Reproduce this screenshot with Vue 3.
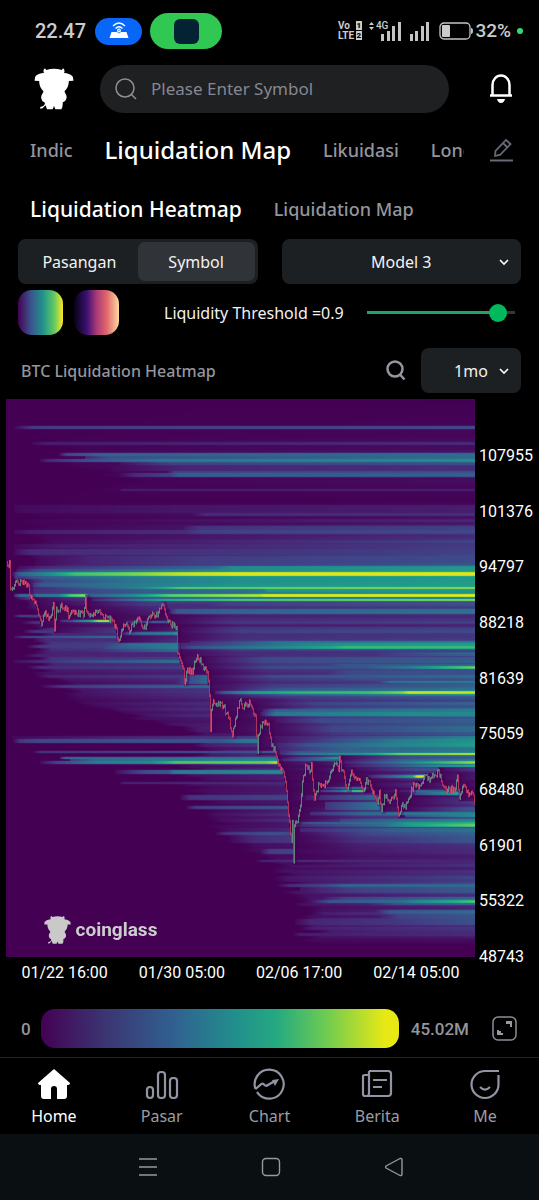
<script setup>
import { onMounted, ref } from 'vue'

const bull =
  'M133 206 Q136 205 139 210 Q162 203 185 210 Q188 205 191 206 Q195 212 192 219 Q208 219 218 230 L220 242 L206 243 Q207 260 193 274 Q195 277 196 280 Q201 287 199 295 Q196 305 188 306 Q189 318 184 327 L166 327 L162 317 L158 327 L141 327 L137 315 L128 324 L121 325 L121 320 L130 317 Q137 312 134 307 Q125 303 124 294 Q123 286 128 280 Q129 277 131 274 Q117 260 118 243 L104 242 L106 230 Q115 219 132 219 Q129 211 133 206Z'

const tabs = ['Indic', 'Liquidation Map', 'Likuidasi', 'Long/Short']
const prices = [107955, 101376, 94797, 88218, 81639, 75059, 68480, 61901, 55322, 48743]
const times = ['01/22 16:00', '01/30 05:00', '02/06 17:00', '02/14 05:00']
const threshold = ref(0.9)
const search = ref('')
const model = ref('Model 3')
const range = ref('1mo')
const canvas = ref(null)

const L = 6
const T = 399
const W = 469
const H = 558

const viridis = [
  [68, 1, 84], [72, 36, 117], [64, 67, 135], [52, 94, 141], [41, 120, 142],
  [32, 144, 140], [34, 167, 132], [68, 190, 112], [121, 209, 81], [189, 222, 38], [240, 230, 30]
]

// Liquidation levels: top, bottom, then [x, intensity] stops
const bands = [
  [426, 429, [14, 0.02], [34, 0.19], [475, 0.24]],
  [442, 445, [32, 0.02], [45, 0.08], [475, 0.12]],
  [453, 456, [58, 0], [66, 0.22], [100, 0.32], [475, 0.36]],
  [456, 459, [85, 0.1], [110, 0.25], [475, 0.35]],
  [459, 462, [38, 0], [48, 0.12], [90, 0.26], [160, 0.4], [475, 0.5]],
  [462, 465, [120, 0.04], [170, 0.2], [475, 0.25]],
  [465, 471, [110, 0.02], [180, 0.1], [475, 0.13]],
  [471, 473, [168, 0.06], [174, 0.2], [475, 0.25]],
  [473, 477, [115, 0], [135, 0.12], [170, 0.2], [178, 0.3], [475, 0.3]],
  [489, 491, [118, 0], [122, 0.08], [475, 0.09]],
  [505, 513, [14, 0.02], [30, 0.03], [180, 0.06], [475, 0.08]],
  [513, 516, [190, 0.02], [205, 0.12], [475, 0.13]],
  [526, 530, [180, 0.04], [198, 0.15], [475, 0.19]],
  [530, 534, [14, 0.03], [30, 0.08], [185, 0.13], [200, 0.19], [475, 0.22]],
  [544, 548, [14, 0.02], [60, 0.08], [475, 0.17]],
  [549, 555, [14, 0.03], [30, 0.12], [475, 0.19]],
  [556, 566, [35, 0.02], [90, 0.1], [200, 0.18], [475, 0.23]],
  [566, 569, [18, 0.04], [50, 0.13], [215, 0.34], [230, 0.49], [475, 0.53]],
  [569, 572, [16, 0.05], [40, 0.25], [235, 0.48], [475, 0.55]],
  [572, 576, [12, 0.08], [20, 0.32], [50, 0.5], [75, 0.7], [130, 0.8], [180, 0.92], [240, 0.97], [475, 0.97]],
  [576, 579, [14, 0.15], [40, 0.28], [100, 0.37], [230, 0.5], [475, 0.53]],
  [579, 583, [28, 0.04], [45, 0.22], [130, 0.38], [240, 0.5], [475, 0.55]],
  [583, 587, [28, 0.06], [40, 0.28], [140, 0.42], [240, 0.52], [475, 0.56]],
  [587, 589, [30, 0.08], [140, 0.46], [180, 0.78], [475, 0.86]],
  [589, 592, [30, 0.12], [150, 0.3], [240, 0.36], [262, 0.4], [268, 0.52], [475, 0.53]],
  [592, 594, [30, 0.12], [150, 0.3], [240, 0.34], [262, 0.42], [475, 0.52]],
  [594, 597, [14, 0.12], [20, 0.35], [58, 0.42], [70, 0.76], [84, 0.86], [88, 0.3], [130, 0.48], [170, 0.78], [240, 0.9], [260, 0.92], [264, 0.99], [475, 0.99]],
  [597, 599, [92, 0.06], [140, 0.25], [240, 0.35], [475, 0.4]],
  [599, 601, [92, 0.1], [120, 0.3], [165, 0.66], [240, 0.8], [475, 0.88]],
  [601, 604, [120, 0.05], [160, 0.16], [475, 0.22]],
  [604, 609, [125, 0.05], [155, 0.12], [475, 0.18]],
  [609, 614, [168, 0.05], [177, 0.28], [230, 0.32], [475, 0.38]],
  [615, 617, [14, 0.05], [20, 0.2], [51, 0.2], [52, 0]],
  [620, 622, [60, 0.1], [76, 0.4], [90, 0.65], [98, 0.99], [108, 0.99], [111, 0.4], [112, 0]],
  [621, 623, [125, 0.1], [145, 0.35], [172, 0.3], [173, 0]],
  [630, 632, [275, 0.1], [475, 0.2]],
  [632, 635, [120, 0.12], [140, 0.36], [172, 0.45], [177, 0.6], [178, 0]],
  [636, 638, [14, 0.05], [25, 0.2], [115, 0.38], [116, 0], [180, 0.02], [475, 0.12]],
  [641, 643, [190, 0.1], [230, 0.2], [280, 0.38], [475, 0.42]],
  [643, 646, [90, 0.08], [130, 0.36], [177, 0.42], [180, 0.1], [280, 0.4], [345, 0.52], [475, 0.56]],
  [646, 649, [90, 0.08], [115, 0.28], [177, 0.44], [180, 0.12], [195, 0.26], [250, 0.4], [330, 0.6], [345, 0.68], [475, 0.68]],
  [649, 652, [65, 0.05], [130, 0.22], [177, 0.34], [180, 0], [475, 0.12]],
  [652, 656, [350, 0.1], [440, 0.28], [475, 0.32]],
  [660, 663, [14, 0.03], [60, 0.18], [120, 0.28], [178, 0.38], [179, 0]],
  [664, 666, [310, 0.1], [345, 0.28], [475, 0.3]],
  [666, 669, [320, 0.12], [370, 0.28], [410, 0.42], [435, 0.6], [475, 0.8]],
  [670, 680, [300, 0.04], [350, 0.22], [475, 0.25]],
  [675, 684, [170, 0.04], [190, 0.24], [206, 0.34], [208, 0.02], [475, 0.26]],
  [681, 683, [380, 0.2], [390, 0.4], [475, 0.43]],
  [685, 688, [42, 0.02], [65, 0.17], [140, 0.27], [208, 0.34], [210, 0.04], [475, 0.3]],
  [688, 691, [235, 0.08], [280, 0.28], [475, 0.38]],
  [691, 694, [215, 0.08], [225, 0.3], [250, 0.56], [300, 0.65], [370, 0.7], [402, 0.82], [408, 0.94], [475, 0.92]],
  [694, 696, [235, 0.08], [290, 0.28], [400, 0.4], [475, 0.46]],
  [709, 712, [262, 0.06], [275, 0.3], [475, 0.42]],
  [712, 716, [260, 0.05], [275, 0.4], [400, 0.48], [475, 0.47]],
  [718, 723, [275, 0.05], [320, 0.22], [475, 0.3]],
  [736, 739, [12, 0.02], [257, 0.18], [258, 0.02], [370, 0.25], [475, 0.46]],
  [739, 743, [13, 0.02], [20, 0.16], [35, 0.22], [220, 0.27], [240, 0.38], [257, 0.42], [258, 0], [300, 0.12], [400, 0.42], [475, 0.52]],
  [743, 747, [275, 0.08], [310, 0.27], [390, 0.44], [475, 0.55]],
  [747, 751, [275, 0.08], [340, 0.3], [475, 0.4]],
  [751, 753, [32, 0], [40, 0.17], [240, 0.26], [275, 0.32], [276, 0.08], [300, 0.28], [475, 0.42]],
  [753, 755, [278, 0.1], [300, 0.38], [360, 0.55], [400, 0.85], [475, 0.97]],
  [757, 759, [60, 0.1], [65, 0.38], [100, 0.36], [275, 0.42], [277, 0], [320, 0.35], [335, 0.55], [338, 0.5], [340, 0], [475, 0.3]],
  [759, 761, [70, 0.15], [95, 0.34], [165, 0.4], [278, 0.45], [279, 0.1], [320, 0.34], [338, 0.3], [340, 0], [475, 0.38]],
  [761, 764, [40, 0.03], [55, 0.2], [95, 0.42], [150, 0.48], [175, 0.73], [265, 0.78], [276, 0.9], [279, 0], [340, 0.05], [405, 0.42], [440, 0.66], [475, 0.86]],
  [765, 767, [345, 0.05], [400, 0.3], [440, 0.54], [475, 0.65]],
  [770, 774, [115, 0.03], [145, 0.24], [168, 0.28], [174, 0.42], [282, 0.48], [283, 0]],
  [775, 778, [368, 0.1], [395, 0.38], [412, 0.6], [417, 0.95], [423, 0.95], [425, 0.1]],
  [782, 784, [118, 0], [124, 0.1], [285, 0.12], [286, 0]],
  [787, 789, [325, 0.1], [345, 0.35], [363, 0.36], [370, 0]],
  [790, 792, [320, 0.15], [340, 0.4], [350, 0.76], [363, 0.8], [365, 0], [409, 0.1], [415, 0.35], [455, 0.36], [460, 0]],
  [792, 795, [410, 0.2], [440, 0.46], [457, 0.62], [459, 0.1]],
  [795, 800, [180, 0.02], [190, 0.15], [287, 0.2], [288, 0], [320, 0.12], [370, 0.32], [377, 0.34], [380, 0.03]],
  [802, 810, [325, 0.15], [375, 0.38], [378, 0.38], [380, 0.1]],
  [806, 809, [186, 0.02], [195, 0.18], [287, 0.28], [288, 0]],
  [812, 815, [310, 0.12], [360, 0.34], [475, 0.45]],
  [815, 817, [405, 0.25], [475, 0.5]],
  [819, 822, [340, 0.2], [390, 0.34], [475, 0.48]],
  [822, 824, [295, 0.1], [310, 0.28], [390, 0.4], [405, 0.54], [475, 0.66]],
  [824, 827, [295, 0.1], [380, 0.35], [410, 0.56], [475, 0.78]],
  [828, 832, [300, 0.1], [390, 0.3], [475, 0.38]],
  [832, 835, [214, 0], [225, 0.14], [270, 0.26], [291, 0.22], [292, 0], [370, 0.22], [475, 0.32]],
  [835, 843, [230, 0.02], [255, 0.12], [290, 0.16], [292, 0], [360, 0.12], [475, 0.27]],
  [849, 854, [258, 0], [270, 0.18], [292, 0.2], [293, 0.02], [475, 0.12]],
  [860, 862, [255, 0], [262, 0.1], [292, 0.12], [475, 0.1]],
  [884, 887, [276, 0], [290, 0.13], [325, 0.22], [345, 0.33], [475, 0.35]],
  [887, 893, [300, 0.05], [350, 0.18], [475, 0.28]],
  [897, 900, [318, 0.04], [345, 0.2], [475, 0.34]],
  [900, 903, [310, 0.04], [330, 0.27], [400, 0.36], [420, 0.5], [450, 0.62], [475, 0.74]],
  [903, 905, [370, 0.1], [400, 0.26], [475, 0.34]],
  [910, 914, [375, 0.08], [390, 0.28], [475, 0.35]],
  [914, 919, [375, 0.05], [400, 0.2], [475, 0.26]],
  [919, 925, [295, 0.02], [310, 0.1], [395, 0.16], [475, 0.25]],
  [933, 936, [292, 0], [300, 0.08], [475, 0.12]]
]

// Ambient levels: y, first x, intensity at the left and right ends
const ambient = [
  [399, 14, 0, 0], [425, 20, 0, 0.01], [450, 50, 0.01, 0.04], [465, 60, 0.01, 0.08],
  [482, 120, 0.01, 0.03], [500, 14, 0, 0], [530, 14, 0.01, 0.12], [560, 20, 0.04, 0.2],
  [575, 16, 0.1, 0.3], [602, 14, 0.12, 0.2], [625, 20, 0.1, 0.14], [645, 24, 0.14, 0.22],
  [665, 20, 0.1, 0.24], [680, 40, 0.05, 0.28], [700, 60, 0.02, 0.28], [730, 170, 0.05, 0.3],
  [750, 190, 0.06, 0.36], [775, 170, 0.03, 0.2], [800, 180, 0.02, 0.16], [820, 195, 0.02, 0.34],
  [845, 220, 0.03, 0.16], [858, 262, 0.04, 0.09], [885, 275, 0.04, 0.18], [905, 290, 0.05, 0.16],
  [925, 296, 0.07, 0.14], [940, 290, 0.02, 0.03], [944, 290, 0, 0], [958, 290, 0, 0]
]

const path = [
  6, 562, 10, 563, 10, 588, 14, 585, 15, 581, 19, 584, 20, 580, 24, 583, 28, 585, 30, 597, 33, 599, 36, 605, 38, 614,
  41, 625, 44, 613, 46, 616, 49, 617, 51, 614, 53, 603, 54, 630, 56, 607, 58, 610, 60, 606, 64, 609, 67, 608, 68, 618,
  71, 611, 76, 613, 80, 612, 83, 616, 85, 597, 86, 611, 90, 614, 95, 611, 100, 613, 106, 616, 112, 620, 115, 625,
  118, 640, 122, 629, 125, 624, 128, 628, 130, 630, 131, 624, 135, 622, 138, 618, 141, 625, 145, 628, 147, 619,
  151, 614, 155, 616, 158, 612, 162, 603, 166, 616, 170, 624, 173, 626, 176, 627, 177, 652, 180, 660, 183, 668,
  184, 683, 187, 668, 190, 673, 193, 668, 196, 658, 200, 658, 203, 669, 207, 672, 209, 695, 210, 730, 211, 710,
  213, 700, 217, 705, 220, 702, 223, 706, 226, 713, 229, 718, 232, 736, 235, 718, 239, 700, 243, 708, 245, 703,
  250, 704, 255, 715, 257, 752, 258, 735, 262, 722, 268, 724, 271, 745, 275, 752, 279, 765, 283, 772, 286, 790,
  288, 815, 291, 842, 292, 820, 293, 862, 294, 825, 297, 822, 300, 805, 303, 775, 306, 765, 310, 770, 311, 763,
  313, 790, 314, 799, 318, 783, 322, 785, 327, 782, 331, 770, 335, 763, 338, 770, 339, 757, 341, 770, 344, 777,
  347, 789, 351, 770, 356, 780, 360, 782, 363, 790, 366, 778, 370, 785, 373, 791, 377, 803, 379, 790, 381, 811,
  384, 795, 388, 800, 392, 797, 395, 790, 398, 815, 401, 805, 405, 808, 409, 797, 413, 783, 420, 785, 425, 775,
  430, 778, 435, 775, 438, 769, 442, 785, 447, 790, 455, 788, 457, 775, 459, 798, 464, 785, 468, 795, 472, 792,
  475, 806
]

const noise = (n) => {
  const s = Math.sin(n * 127.1 + 11.7) * 43758.5453
  return s - Math.floor(s)
}

function along(stops, x) {
  if (x < stops[0][0]) return 0
  for (let i = 1; i < stops.length; i++) {
    const [bx, bv] = stops[i]
    const [ax, av] = stops[i - 1]
    if (x <= bx) return av + ((bv - av) * (x - ax)) / (bx - ax)
  }
  return 0
}

function priceAt(x) {
  for (let i = 2; i < path.length; i += 2) {
    const span = path[i] - path[i - 2]
    if (x <= path[i] && span > 0) {
      return path[i - 1] + ((path[i + 1] - path[i - 1]) * (x - path[i - 2])) / span
    }
  }
  return path[path.length - 1]
}

function colour(v) {
  const p = Math.max(0, Math.min(0.999, v)) * 10
  const i = Math.floor(p)
  return viridis[i].map((c, k) => c + (viridis[i + 1][k] - c) * (p - i))
}

onMounted(() => {
  const ctx = canvas.value.getContext('2d')
  const img = ctx.createImageData(W, H)
  const price = Array.from({ length: W }, (_, x) => priceAt(x + L))
  const field = new Float32Array(W * H)

  for (let r = 0; r < H; r++) {
    const y = r + T
    const rows = bands.filter((b) => y >= b[0] && y < b[1]).map((b) => b.slice(2))
    const row = Math.floor(y / 3)
    const k = Math.max(1, ambient.findIndex((a) => a[0] > y))
    const a = ambient[k - 1]
    const b = ambient[k]
    const f = (y - a[0]) / (b[0] - a[0])
    const mix = (i) => a[i] + (b[i] - a[i]) * f
    const start = mix(1) + noise(row + 50) * 24
    const gain = 0.6 + noise(row) * 0.8
    let crossed = -999
    for (let c = 0; c < W; c++) {
      const x = c + L
      const before = price[Math.max(0, c - 1)]
      if (y >= Math.min(before, price[c]) - 2 && y <= Math.max(before, price[c]) + 2) crossed = x
      let v = 0
      if (x > start) {
        const t = Math.floor((x - start) / 6) * 6 / (475 - start)
        v = (mix(2) + (mix(3) - mix(2)) * t) * gain * Math.min(1, (x - start) / 14)
      }
      v *= Math.min(1, 0.1 + (x - crossed) / 70)
      for (const s of rows) v = Math.max(v, along(s, x))
      if (x - crossed < 4) v *= 0.55
      field[r * W + c] = v
    }
  }

  for (let r = 0; r < H; r++) {
    const up = Math.max(0, r - 1) * W
    const down = Math.min(H - 1, r + 1) * W
    for (let c = 0; c < W; c++) {
      const v = field[r * W + c] * 0.7 + field[up + c] * 0.15 + field[down + c] * 0.15
      const rgb = colour(v)
      const o = (r * W + c) * 4
      img.data[o] = rgb[0]
      img.data[o + 1] = rgb[1]
      img.data[o + 2] = rgb[2]
      img.data[o + 3] = 255
    }
  }
  ctx.putImageData(img, 0, 0)

  let last = path[1]
  ctx.globalAlpha = 0.85
  for (let i = 2; i < path.length; i += 2) {
    const x0 = path[i - 2]
    const steps = Math.max(1, path[i] - x0)
    for (let s = 1; s <= steps; s++) {
      const x = path[i] === x0 ? x0 : x0 + s
      let y = path[i - 1] + ((path[i + 1] - path[i - 1]) * s) / steps
      if (s < steps) y += (noise(x) - 0.5) * 7
      const wick = noise(x + 300) * 3
      ctx.fillStyle = y > last ? '#c03c62' : '#6a9488'
      ctx.fillRect(x - L, Math.min(last, y) - T - wick / 2, 1, Math.abs(y - last) + 1 + wick)
      last = y
    }
  }
})
</script>

<template>
  <div class="app">
    <div class="status">
      <span class="clock">22.47</span>
      <span class="pill blue">
        <svg width="20" height="18" viewBox="0 0 20 18" fill="none" stroke="#fff" stroke-width="1.3">
          <path d="M4 4 Q10 -2 16 4 M6.5 6.5 Q10 3 13.5 6.5" />
          <circle cx="10" cy="8.5" r="1.3" />
          <path d="M2.500 10 H8 L10 11.500 L12 10 H17.500 L19.500 16 H0.500Z" fill="#fff" stroke="none" />
        </svg>
      </span>
      <span class="pill green"><i></i></span>
      <span class="spacer"></span>
      <span class="volte"><span>Vo <b>1</b></span><span>LTE<b>2</b></span></span>
      <span class="net">
        <svg width="5" height="8" viewBox="0 0 5 8" fill="#ccc"><path d="M0 3 L2.5 0 L5 3Z M0 5 L2.5 8 L5 5Z" /></svg>
        <span>4G</span>
      </span>
      <svg class="bars" width="20" height="19" viewBox="0 0 20 19" fill="#c4c4c4"><path d="M0 12h3v7H0z M6 9h3v10H6z M11 4h3v15h-3z M17 0h3v19h-3z" /></svg>
      <svg class="bars second" width="19" height="19" viewBox="0 0 19 19" fill="#c4c4c4"><path d="M0 12h3v7H0z M5 9h3v10H5z M11 4h3v15h-3z M16 0h3v19h-3z" /></svg>
      <svg width="34" height="18" viewBox="0 0 34 18">
        <rect x="1" y="1" width="30" height="16" rx="4" fill="none" stroke="#c4c4c4" stroke-width="1.3" />
        <rect x="3" y="3" width="8" height="12" rx="1" fill="#ccc" />
        <path d="M32 6 Q34 6 34 9 Q34 12 32 12Z" fill="#c4c4c4" />
      </svg>
      <span class="battery">32%</span>
      <i class="dot"></i>
    </div>

    <header class="header">
      <svg class="logo" viewBox="103 204 118 125" role="img" aria-label="Coinglass"><path :d="bull" fill="#fff" /></svg>
      <label class="search">
        <svg width="22" height="22" viewBox="0 0 22 22" fill="none" stroke="#8e9098" stroke-width="1.5"><circle cx="10" cy="10" r="9" /><path d="M16.5 16.5 L21 21" /></svg>
        <input v-model="search" type="text" placeholder="Please Enter Symbol" aria-label="Please Enter Symbol">
      </label>
      <button class="bell" aria-label="Notifications">
        <svg width="24" height="30" viewBox="0 0 24 30"><path d="M3.5 21 V11 A8.5 9.5 0 0 1 20.5 11 V21 M1 21.5 H23" fill="none" stroke="#fff" stroke-width="2.5" /><path d="M8 25 H16 Q15 29 12 29 Q9 29 8 25Z" fill="#fff" /></svg>
      </button>
    </header>

    <nav class="tabs">
      <div class="tab-list">
        <button v-for="(t, i) in tabs" :key="t" :class="{ active: i === 1 }">{{ t }}</button>
      </div>
      <button class="edit" aria-label="Edit">
        <svg width="23" height="24" viewBox="0 0 23 24" fill="none" stroke="#686a78" stroke-width="1.8"><path d="M5 18 L5.5 13 L16 2 L20.5 6 L10 17Z M13 5 L17.5 9.5 M0 22.5 H23" /></svg>
      </button>
    </nav>

    <nav class="subtabs">
      <button class="active">Liquidation Heatmap</button>
      <button>Liquidation Map</button>
    </nav>

    <div class="controls">
      <div class="segmented">
        <button>Pasangan</button>
        <button class="on">Symbol</button>
      </div>
      <div class="select wide">
        <select v-model="model" aria-label="Model"><option>Model 3</option><option>Model 2</option></select>
        <svg width="10" height="7" viewBox="0 0 10 7" fill="none" stroke="#fff" stroke-width="1.6"><path d="M1 1 L5 5 L9 1" /></svg>
      </div>
    </div>

    <div class="threshold">
      <button class="swatch viridis" aria-label="Viridis"></button>
      <button class="swatch magma" aria-label="Magma"></button>
      <label for="threshold">Liquidity Threshold ={{ threshold }}</label>
      <input id="threshold" v-model="threshold" type="range" min="0" max="0.96" step="0.02">
    </div>

    <div class="title">
      <h1>BTC Liquidation Heatmap</h1>
      <button class="find" aria-label="Search">
        <svg width="20" height="21" viewBox="0 0 20 21" fill="none" stroke="#9496a0" stroke-width="2.5"><circle cx="9" cy="9" r="7.5" /><path d="M13.5 14 L18.5 19.5" /></svg>
      </button>
      <div class="select small">
        <select v-model="range" aria-label="Range"><option>1mo</option><option>3mo</option></select>
        <svg width="10" height="7" viewBox="0 0 10 7" fill="none" stroke="#fff" stroke-width="1.6"><path d="M1 1 L5 5 L9 1" /></svg>
      </div>
    </div>

    <div class="chart">
      <div class="plot">
        <canvas ref="canvas" :width="W" :height="H"></canvas>
        <div class="mark">
          <svg viewBox="103 204 118 125"><path :d="bull" fill="#c9c9c9" /></svg>
          <span>coinglass</span>
        </div>
      </div>
      <div class="prices"><span v-for="p in prices" :key="p">{{ p }}</span></div>
      <div class="times"><span v-for="t in times" :key="t">{{ t }}</span></div>
    </div>

    <div class="legend">
      <span>0</span>
      <div class="scale"></div>
      <span>45.02M</span>
      <button aria-label="Fullscreen">
        <svg width="25" height="25" viewBox="0 0 25 25"><rect x="1" y="1" width="23" height="23" rx="5" fill="none" stroke="#8c8e98" stroke-width="1.5" /><path d="M14 5 H20 V11 H18 V8 H14Z M5 14 H7 V15 H9 V17 H11 V19 H5Z" fill="#9698a2" /></svg>
      </button>
    </div>

    <nav class="bottom">
      <a href="#" class="current">
        <svg width="34" height="32" viewBox="0 0 34 32"><path d="M17 1 L33 15 Q33 17 30 17 V28 Q30 31 27 31 H20 V21 Q20 18 17 18 Q14 18 14 21 V31 H7 Q4 31 4 28 V17 Q1 17 1 15Z" fill="#fff" /></svg>
        <span>Home</span>
      </a>
      <a href="#">
        <svg width="34" height="32" viewBox="0 0 34 32" fill="none" stroke="#9194a2" stroke-width="2.2"><rect x="2" y="19" width="6" height="11" rx="3" /><rect x="13" y="4" width="7" height="26" rx="3" /><rect x="25" y="10" width="7" height="20" rx="3" /></svg>
        <span>Pasar</span>
      </a>
      <a href="#">
        <svg width="34" height="32" viewBox="0 0 34 32" fill="none" stroke="#9194a2" stroke-width="2.200"><path d="M3.500 21 A14.500 14.500 0 1 1 6.500 26 L5 24 M3.500 21 L9.500 16 Q11 15 12.500 17 Q14 18.500 16 17 L22 13.500" /><path d="M20 12 L27 11 L23 18Z" fill="#9194a2" stroke="none" /></svg>
        <span>Chart</span>
      </a>
      <a href="#">
        <svg width="34" height="32" viewBox="0 0 34 32" fill="none" stroke="#9194a2" stroke-width="2.2"><path d="M9 3 H28 Q31 3 31 6 V25 Q31 28 28 28 H5 Q3 28 3 26 V8 Q3 7 5 7 H8 M9 3 V25 Q9 28 7 28 M13 12 H27 M13 19 H22" /></svg>
        <span>Berita</span>
      </a>
      <a href="#">
        <svg width="34" height="32" viewBox="0 0 34 32" fill="none" stroke="#9194a2" stroke-width="2.2"><path d="M31 3 H17 A13.5 13.5 0 1 0 30.5 16.5 V7 M12 19 Q17 24 22 19" /></svg>
        <span>Me</span>
      </a>
    </nav>

    <div class="system">
      <button aria-label="Recent apps"><svg width="20" height="20" viewBox="0 0 20 20" stroke="#999" stroke-width="1.4"><path d="M1 2H19 M1 10H19 M1 18H19" /></svg></button>
      <button aria-label="Home screen"><svg width="20" height="20" viewBox="0 0 20 20" fill="none" stroke="#999" stroke-width="1.4"><rect x="1.5" y="1.5" width="17" height="17" rx="3.5" /></svg></button>
      <button aria-label="Back"><svg width="20" height="20" viewBox="0 0 20 20" fill="none" stroke="#999" stroke-width="1.4" stroke-linejoin="round"><path d="M2 9 L16 1.5 Q18 1 18 3 V17 Q18 19 16 18.5 L2 11 Q1 10 2 9Z" /></svg></button>
    </div>
  </div>
</template>

<style>
body {
  background: #000;
}
</style>

<style scoped>
.app {
  background: #000;
  color: #f2f2f2;
  font-family: "Noto Sans", Roboto, sans-serif;
  font-size: 16px;
  line-height: 20px;
  min-height: 100vh;
  overflow: hidden;
  display: flex;
  flex-direction: column;
}
* {
  box-sizing: border-box;
}
button,
select,
input {
  font: inherit;
  color: inherit;
  background: none;
  border: 0;
  padding: 0;
  margin: 0;
}
svg {
  display: block;
  flex: none;
}
.status {
  height: 62px;
  padding: 0 16px 0 35px;
  display: flex;
  align-items: center;
  color: #ccc;
  font-family: Roboto, sans-serif;
}
.clock {
  font-size: 20px;
  font-weight: 500;
  width: 60px;
}
.pill {
  display: flex;
  align-items: center;
  justify-content: center;
  border-radius: 18px;
}
.blue {
  width: 47px;
  height: 27px;
  background: #0866f8;
}
.green {
  width: 72px;
  height: 36px;
  margin-left: 8px;
  background: #30c852;
}
.green i {
  width: 25px;
  height: 25px;
  border-radius: 6px;
  background: #052235;
}
.spacer {
  flex: 1;
}
.volte {
  display: grid;
  width: 24px;
  font-size: 10px;
  font-weight: 700;
  line-height: 10px;
}
.volte span {
  display: flex;
  justify-content: space-between;
}
.volte b {
  background: #ccc;
  color: #000;
  font-size: 8px;
  line-height: 9px;
  height: 9px;
  width: 6px;
  text-align: center;
}
.net {
  display: flex;
  align-self: flex-start;
  align-items: center;
  gap: 2px;
  margin: 20px -7px 0 7px;
  font-size: 10px;
  line-height: 11px;
  font-weight: 500;
}
.second {
  margin: 0 10px 0 9px;
}
.battery {
  font-size: 19px;
  font-weight: 500;
  margin-left: 2px;
}
.dot {
  width: 6px;
  height: 6px;
  border-radius: 50%;
  background: #38d878;
  margin-left: 6px;
}
.header {
  display: flex;
  align-items: center;
  padding: 3px 26px 0 34px;
}
.logo {
  width: 40px;
  height: 42px;
  margin-right: 26px;
}
.search {
  flex: 1;
  min-width: 0;
  height: 48px;
  border-radius: 24px;
  background: #1e2022;
  padding: 0 15px;
  display: flex;
  align-items: center;
  gap: 14px;
}
.search input {
  flex: 1;
  min-width: 0;
  outline: 0;
  font-size: 17px;
}
.search input::placeholder {
  color: #858792;
  opacity: 1;
}
.bell {
  margin-left: 40px;
}
.tabs {
  display: flex;
  align-items: center;
  padding: 0 26px 0 30px;
  height: 74px;
}
.tab-list {
  flex: 1;
  min-width: 0;
  overflow: hidden;
  display: flex;
  align-items: center;
  gap: 32px;
  white-space: nowrap;
}
.tabs button {
  flex: none;
  font-size: 18px;
  line-height: 32px;
  font-weight: 500;
  color: #94959d;
}
.tabs .active {
  font-size: 24px;
  color: #fff;
}
.tabs .edit {
  margin-left: 26px;
}
.subtabs {
  display: flex;
  align-items: center;
  gap: 32px;
  height: 44px;
  padding: 0 30px;
}
.subtabs button {
  font-size: 18px;
  font-weight: 500;
  color: #94959d;
  white-space: nowrap;
}
.subtabs .active {
  font-size: 21px;
  color: #fff;
}
.controls {
  display: grid;
  grid-template-columns: 1fr 1fr;
  gap: 24px;
  padding: 8px 18px 0;
}
.segmented {
  height: 45px;
  border-radius: 8px;
  background: #1d2022;
  padding: 3px;
  display: grid;
  grid-template-columns: 1fr 1fr;
}
.segmented .on {
  background: #303439;
  border-radius: 7px;
}
.select {
  position: relative;
  height: 45px;
  border-radius: 8px;
  background: #1d2022;
}
.select select {
  width: 100%;
  height: 100%;
  appearance: none;
  outline: 0;
  text-align-last: center;
}
.select svg {
  position: absolute;
  right: 12px;
  top: 20px;
  pointer-events: none;
}
.threshold {
  display: flex;
  align-items: center;
  padding: 6px 24px 0 18px;
}
.swatch {
  flex: none;
  width: 45px;
  height: 45px;
  border-radius: 14px;
  margin-right: 11px;
}
.viridis {
  background: linear-gradient(90deg, #440154, #3b528b 28%, #21918c 55%, #5ec962 80%, #fde725);
}
.magma {
  background: linear-gradient(90deg, #050313, #3b0f70 28%, #a83a78 50%, #e0656c 72%, #fcd9a0);
}
.threshold label {
  flex: 1;
  padding-left: 34px;
  white-space: nowrap;
}
.threshold input {
  appearance: none;
  width: 148px;
  height: 18px;
  background: linear-gradient(90deg, #20a562 0 131px, #35383a 131px) center / 100% 3px no-repeat;
}
.threshold input::-webkit-slider-thumb {
  appearance: none;
  width: 18px;
  height: 18px;
  border-radius: 50%;
  background: #00b95c;
}
.title {
  display: flex;
  align-items: center;
  padding: 13px 18px 6px 21px;
}
.title h1 {
  flex: 1;
  margin: 0;
  font-size: 16px;
  font-weight: 500;
  color: #94959d;
}
.small {
  width: 100px;
  margin-left: 15px;
}
.chart {
  display: grid;
  grid-template-columns: 1fr 64px;
  padding-left: 6px;
  font-family: Roboto, sans-serif;
}
.plot {
  position: relative;
}
.plot canvas {
  display: block;
  width: 100%;
}
.mark {
  position: absolute;
  left: 8%;
  bottom: 12px;
  display: flex;
  align-items: center;
  gap: 5px;
  color: #ccc;
  font-size: 19px;
  font-weight: 700;
}
.mark svg {
  width: 27px;
  height: 30px;
}
.prices {
  display: flex;
  flex-direction: column;
  justify-content: space-between;
  padding: 47px 0 0 4px;
  margin-bottom: -10px;
  color: #fff;
}
.times {
  display: grid;
  grid-template-columns: repeat(4, 1fr);
  padding-top: 6px;
  text-align: center;
  color: #fff;
  white-space: nowrap;
}
.legend {
  display: flex;
  align-items: center;
  padding: 26px 22px 9px 21px;
  color: #94959d;
  font-family: Roboto, sans-serif;
  font-size: 17px;
  font-weight: 500;
}
.scale {
  flex: 1;
  height: 39px;
  margin: 0 12px 0 10px;
  border-radius: 14px;
  background: linear-gradient(90deg, #440154, #3b3572 18%, #306090 37%, #21918c 55%, #25aa80 66%, #70cc50 80%, #e8e815 96%);
}
.legend button {
  margin-left: 23px;
}
.bottom {
  border-top: 1px solid #22222a;
  display: grid;
  grid-template-columns: repeat(5, 1fr);
  height: 77px;
  padding-top: 10px;
}
.bottom a {
  display: flex;
  flex-direction: column;
  align-items: center;
  gap: 6px;
  color: #9c9da3;
  text-decoration: none;
}
.bottom .current {
  color: #fff;
}
.system {
  flex: 1;
  min-height: 66px;
  padding-left: 3px;
  background: #0a0f12;
  display: flex;
  justify-content: center;
  align-items: center;
  gap: 103px;
}
</style>
